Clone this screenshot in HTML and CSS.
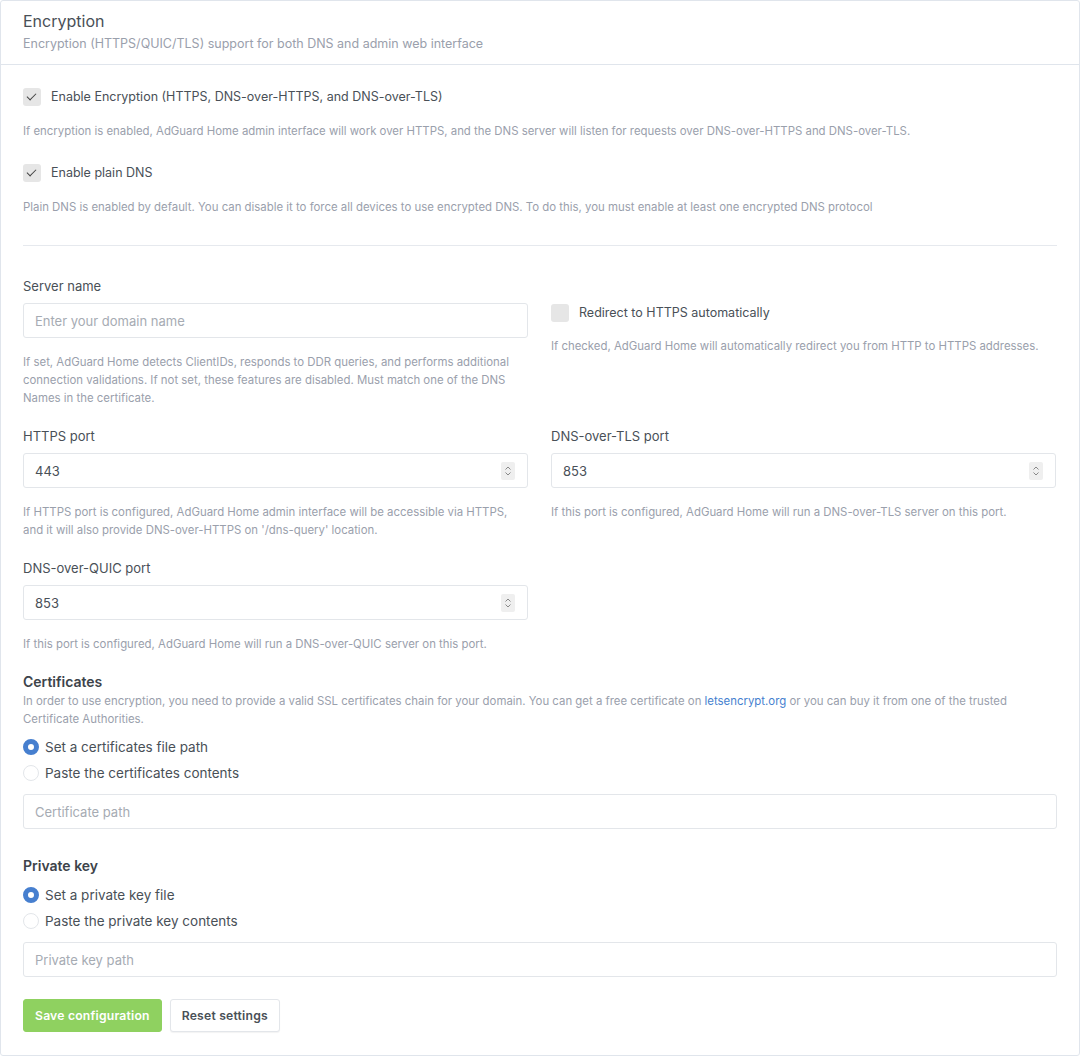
FILE: index.html
```html
<!DOCTYPE html>
<html lang="en">
<head>
    <meta charset="UTF-8">
    <title>Encryption settings</title>
    <link rel="stylesheet" href="styles.css">
</head>
<body>
    <div class="card">
        <div class="card-header">
            <div class="card-title">Encryption</div>
            <div class="card-subtitle">Encryption (HTTPS/QUIC/TLS) support for both DNS and admin web interface</div>
        </div>
        <div class="card-body">
            <label class="check">
                <span class="check-box checked"></span>
                <span>Enable Encryption (HTTPS, DNS-over-HTTPS, and DNS-over-TLS)</span>
            </label>
            <p class="help">If encryption is enabled, AdGuard Home admin interface will work over HTTPS, and the DNS server will listen for requests over DNS-over-HTTPS and DNS-over-TLS.</p>

            <label class="check">
                <span class="check-box checked"></span>
                <span>Enable plain DNS</span>
            </label>
            <p class="help">Plain DNS is enabled by default. You can disable it to force all devices to use encrypted DNS. To do this, you must enable at least one encrypted DNS protocol</p>

            <hr class="divider">

            <div class="grid">
                <div class="field">
                    <div class="label">Server name</div>
                    <input class="input" type="text" placeholder="Enter your domain name">
                    <p class="help multi">If set, AdGuard Home detects ClientIDs, responds to DDR queries, and performs additional connection validations. If not set, these features are disabled. Must match one of the DNS Names in the certificate.</p>
                </div>
                <div class="field redirect">
                    <label class="check">
                        <span class="check-box"></span>
                        <span>Redirect to HTTPS automatically</span>
                    </label>
                    <p class="help">If checked, AdGuard Home will automatically redirect you from HTTP to HTTPS addresses.</p>
                </div>

                <div class="field">
                    <div class="label">HTTPS port</div>
                    <div class="number">
                        <span>443</span>
                        <span class="spin"><svg width="8" height="12" viewBox="0 0 8 12"><path d="M1.5 4.5L4 2l2.5 2.5M1.5 7.5L4 10l2.5-2.5" fill="none" stroke="#888" stroke-width="1"/></svg></span>
                    </div>
                    <p class="help multi">If HTTPS port is configured, AdGuard Home admin interface will be accessible via HTTPS, and it will also provide DNS-over-HTTPS on '/dns-query' location.</p>
                </div>
                <div class="field">
                    <div class="label">DNS-over-TLS port</div>
                    <div class="number">
                        <span>853</span>
                        <span class="spin"><svg width="8" height="12" viewBox="0 0 8 12"><path d="M1.5 4.5L4 2l2.5 2.5M1.5 7.5L4 10l2.5-2.5" fill="none" stroke="#888" stroke-width="1"/></svg></span>
                    </div>
                    <p class="help multi">If this port is configured, AdGuard Home will run a DNS-over-TLS server on this port.</p>
                </div>

                <div class="field">
                    <div class="label">DNS-over-QUIC port</div>
                    <div class="number">
                        <span>853</span>
                        <span class="spin"><svg width="8" height="12" viewBox="0 0 8 12"><path d="M1.5 4.5L4 2l2.5 2.5M1.5 7.5L4 10l2.5-2.5" fill="none" stroke="#888" stroke-width="1"/></svg></span>
                    </div>
                    <p class="help multi">If this port is configured, AdGuard Home will run a DNS-over-QUIC server on this port.</p>
                </div>
            </div>

            <div class="section">
                <div class="section-title">Certificates</div>
                <p class="section-desc">In order to use encryption, you need to provide a valid SSL certificates chain for your domain. You can get a free certificate on <a href="#">letsencrypt.org</a> or you can buy it from one of the trusted Certificate Authorities.</p>
                <label class="radio"><span class="radio-dot on"></span>Set a certificates file path</label>
                <label class="radio"><span class="radio-dot"></span>Paste the certificates contents</label>
                <input class="input wide" type="text" placeholder="Certificate path">
            </div>

            <div class="section key">
                <div class="section-title">Private key</div>
                <label class="radio first"><span class="radio-dot on"></span>Set a private key file</label>
                <label class="radio"><span class="radio-dot"></span>Paste the private key contents</label>
                <input class="input wide" type="text" placeholder="Private key path">
            </div>

            <div class="actions">
                <button class="btn btn-save">Save configuration</button>
                <button class="btn btn-reset">Reset settings</button>
            </div>
        </div>
    </div>
</body>
</html>
```

FILE: styles.css
```css
/* Base */
body {
    margin: 0;
    background: #fff;
    font-family: Inter, "Noto Sans", sans-serif;
    color: #495057;
}

.card {
    width: 1078px;
    height: 1054px;
    border: 1px solid #e0e5ec;
    border-radius: 3px;
    background: #fff;
}

/* Header */
.card-header {
    height: 64px;
    padding: 10px 22px 0;
    box-sizing: border-box;
    border-bottom: 1px solid #e0e5ec;
}

.card-title {
    font-size: 16px;
    line-height: 20px;
    color: #495057;
}

.card-subtitle {
    margin-top: 5px;
    font-size: 12.5px;
    line-height: 16px;
    color: #9aa0ac;
}

.card-body {
    padding: 23px 22px 0;
}

/* Checkboxes */
.check {
    display: flex;
    align-items: center;
    gap: 10px;
    font-size: 12.5px;
    line-height: 18px;
    color: #495057;
}

.check-box {
    position: relative;
    width: 18px;
    height: 18px;
    border-radius: 3px;
    background: #e6e6e6;
    flex: none;
}

.check-box.checked::after {
    content: "";
    position: absolute;
    left: 6px;
    top: 3px;
    width: 4px;
    height: 8px;
    border: solid #444;
    border-width: 0 1.3px 1.3px 0;
    transform: rotate(45deg);
}

.help {
    margin: 16px 0 24px;
    font-size: 11.4px;
    line-height: 18px;
    color: #9aa0ac;
}

.divider {
    border: 0;
    border-top: 1px solid #e6e9ee;
    margin: 29px 0 31px;
}

/* Fields grid */
.grid {
    display: grid;
    grid-template-columns: 505px 505px;
    column-gap: 23px;
}

.field {
    margin-bottom: 20px;
}

.label {
    font-size: 13px;
    line-height: 18px;
    margin-bottom: 8px;
}

.input,
.number {
    display: flex;
    align-items: center;
    justify-content: space-between;
    width: 100%;
    height: 35px;
    box-sizing: border-box;
    padding: 0 11px;
    border: 1px solid #e3e6ea;
    border-radius: 3px;
    font-family: inherit;
    font-size: 13px;
    color: #495057;
    background: #fff;
}

.input::placeholder {
    color: #a6abb3;
}

.spin {
    display: flex;
    align-items: center;
    justify-content: center;
    width: 14px;
    height: 18px;
    margin-right: 1px;
    background: #efefef;
    border-radius: 2px;
}

.help.multi {
    margin: 15px 0 0;
}

.redirect {
    padding-top: 27px;
}

.redirect .help {
    margin-top: 15px;
}

/* Certificates */
.section-title {
    font-size: 14px;
    font-weight: 600;
    line-height: 18px;
    color: #3d434a;
}

.section-desc {
    margin: 1px 0 6px;
    font-size: 11.4px;
    line-height: 18px;
    color: #9aa0ac;
}

.section-desc a {
    color: #467fcf;
    text-decoration: none;
}

.radio {
    display: flex;
    align-items: center;
    gap: 6px;
    font-size: 13.5px;
    line-height: 26px;
    color: #495057;
}

.radio.first {
    margin-top: 7px;
}

.radio-dot {
    width: 16px;
    height: 16px;
    border: 1px solid #e3e6ea;
    border-radius: 50%;
    background: #fff;
    box-sizing: border-box;
}

.radio-dot.on {
    border: 5px solid #467fcf;
}

.input.wide {
    margin-top: 8px;
}

.key {
    margin-top: 28px;
}

/* Buttons */
.actions {
    display: flex;
    gap: 8px;
    margin-top: 22px;
}

.btn {
    height: 33px;
    padding: 0 11px;
    border-radius: 3px;
    font-family: inherit;
    font-size: 12.2px;
    font-weight: 600;
    letter-spacing: 0.2px;
}

.btn-save {
    border: 1px solid #8fd160;
    background: #8fd160;
    color: #fff;
}

.btn-reset {
    border: 1px solid #e3e6ea;
    background: #fff;
    color: #495057;
    box-shadow: 0 1px 1px rgba(0, 0, 0, 0.05);
}
```
